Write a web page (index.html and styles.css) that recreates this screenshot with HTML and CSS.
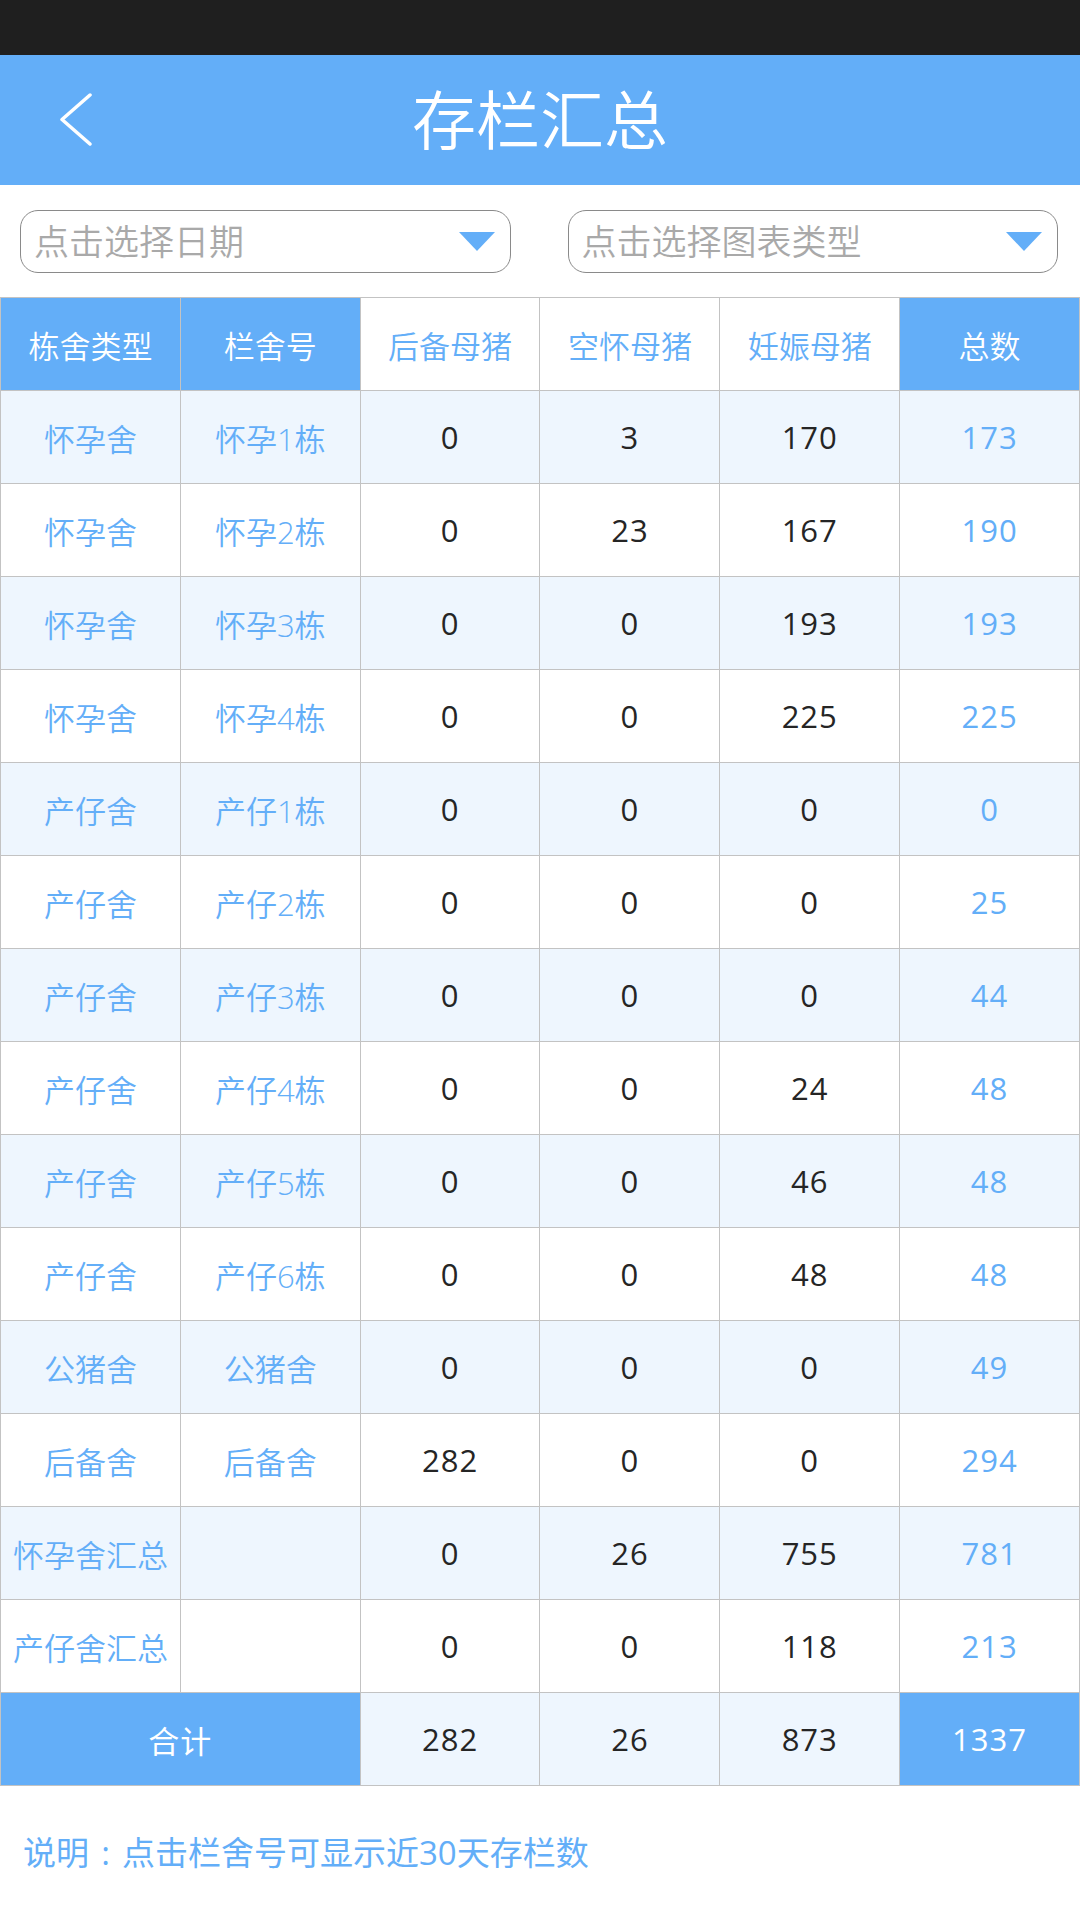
FILE: index.html
```html
<!DOCTYPE html>
<html lang="zh-CN">
<head>
  <meta charset="UTF-8" />
  <meta name="viewport" content="width=device-width, initial-scale=1.0"/>
  <title>存栏汇总</title>
  <link rel="stylesheet" href="styles.css">
</head>
<body>

<div class="status-bar"></div>

<header>
  <button class="back-btn" aria-label="返回">
    <svg width="34" height="54" viewBox="0 0 34 54">
      <polyline points="31,2 3,26.5 31,51" fill="none" stroke="#fff" stroke-width="3.5" stroke-linecap="round" stroke-linejoin="round"/>
    </svg>
  </button>
  <h1>存栏汇总</h1>
</header>

<div class="filters">
  <div class="select">
    <span>点击选择日期</span>
    <i class="arrow"></i>
  </div>
  <div class="select">
    <span>点击选择图表类型</span>
    <i class="arrow"></i>
  </div>
</div>

<table class="stock-table">
  <thead>
    <tr>
      <th class="hl">栋舍类型</th>
      <th class="hl">栏舍号</th>
      <th>后备母猪</th>
      <th>空怀母猪</th>
      <th>妊娠母猪</th>
      <th class="hl">总数</th>
    </tr>
  </thead>
  <tbody>
    <tr><td class="name">怀孕舍</td><td class="name">怀孕1栋</td><td>0</td><td>3</td><td>170</td><td class="total">173</td></tr>
    <tr><td class="name">怀孕舍</td><td class="name">怀孕2栋</td><td>0</td><td>23</td><td>167</td><td class="total">190</td></tr>
    <tr><td class="name">怀孕舍</td><td class="name">怀孕3栋</td><td>0</td><td>0</td><td>193</td><td class="total">193</td></tr>
    <tr><td class="name">怀孕舍</td><td class="name">怀孕4栋</td><td>0</td><td>0</td><td>225</td><td class="total">225</td></tr>
    <tr><td class="name">产仔舍</td><td class="name">产仔1栋</td><td>0</td><td>0</td><td>0</td><td class="total">0</td></tr>
    <tr><td class="name">产仔舍</td><td class="name">产仔2栋</td><td>0</td><td>0</td><td>0</td><td class="total">25</td></tr>
    <tr><td class="name">产仔舍</td><td class="name">产仔3栋</td><td>0</td><td>0</td><td>0</td><td class="total">44</td></tr>
    <tr><td class="name">产仔舍</td><td class="name">产仔4栋</td><td>0</td><td>0</td><td>24</td><td class="total">48</td></tr>
    <tr><td class="name">产仔舍</td><td class="name">产仔5栋</td><td>0</td><td>0</td><td>46</td><td class="total">48</td></tr>
    <tr><td class="name">产仔舍</td><td class="name">产仔6栋</td><td>0</td><td>0</td><td>48</td><td class="total">48</td></tr>
    <tr><td class="name">公猪舍</td><td class="name">公猪舍</td><td>0</td><td>0</td><td>0</td><td class="total">49</td></tr>
    <tr><td class="name">后备舍</td><td class="name">后备舍</td><td>282</td><td>0</td><td>0</td><td class="total">294</td></tr>
    <tr><td class="name">怀孕舍汇总</td><td class="name"></td><td>0</td><td>26</td><td>755</td><td class="total">781</td></tr>
    <tr><td class="name">产仔舍汇总</td><td class="name"></td><td>0</td><td>0</td><td>118</td><td class="total">213</td></tr>
    <tr class="sum-row"><td class="hl" colspan="2">合计</td><td>282</td><td>26</td><td>873</td><td class="hl">1337</td></tr>
  </tbody>
</table>

<p class="note">说明<span class="colon">:</span>点击栏舍号可显示近30天存栏数</p>

</body>
</html>
```

FILE: styles.css
```css
body {
  font-family: "Open Sans", "Noto Sans CJK SC", sans-serif;
  font-weight: 350;
  margin: 0;
  padding: 0;
  background: #fff;
  width: 1080px;
}

.status-bar {
  height: 55px;
  background: #1f1f1f;
}

header {
  height: 130px;
  background: #63aef8;
  display: flex;
  align-items: center;
  justify-content: center;
  position: relative;
}

header h1 {
  margin: 0;
  color: #fff;
  font-size: 64px;
  font-weight: 350;
  line-height: 1;
}

.back-btn {
  position: absolute;
  left: 59px;
  top: 38px;
  width: 34px;
  height: 54px;
  padding: 0;
  border: none;
  background: none;
}

.back-btn svg {
  display: block;
}

.filters {
  display: flex;
  gap: 57px;
  padding: 25px 22px 24px 20px;
}

.select {
  flex: 1;
  height: 63px;
  box-sizing: border-box;
  border: 1.5px solid #8a8a8a;
  border-radius: 18px;
  display: flex;
  align-items: center;
  justify-content: space-between;
  padding: 0 15px 0 13px;
}

.select span {
  font-size: 35px;
  color: #a9a9a9;
  line-height: 1;
}

.arrow {
  width: 0;
  height: 0;
  border-left: 18px solid transparent;
  border-right: 18px solid transparent;
  border-top: 19px solid #63aef8;
}

.stock-table {
  width: 1080px;
  border-collapse: collapse;
  table-layout: fixed;
}

.stock-table tr {
  height: 93px;
}

.stock-table th,
.stock-table td {
  border: 1px solid #c3c3c3;
  text-align: center;
  vertical-align: middle;
  padding: 0;
  font-size: 31px;
  font-weight: 400;
  color: #252525;
  letter-spacing: 1px;
}

.stock-table th {
  color: #63aef8;
  background: #fff;
  font-weight: 350;
  letter-spacing: 0;
}

.stock-table tbody tr:nth-child(odd) td {
  background: #eef6fe;
}

.stock-table td.name {
  color: #63aef8;
  font-weight: 350;
  letter-spacing: 0;
}

.stock-table td.total {
  color: #63aef8;
}

.stock-table .hl,
.stock-table tbody tr:nth-child(odd) td.hl {
  background: #63aef8;
  color: #fff;
}

.note {
  margin: 43px 0 0 23px;
  font-size: 33px;
  font-weight: 400;
  line-height: 48px;
  color: #63aef8;
}

.note .colon {
  display: inline-block;
  width: 1em;
  text-align: center;
}
```
